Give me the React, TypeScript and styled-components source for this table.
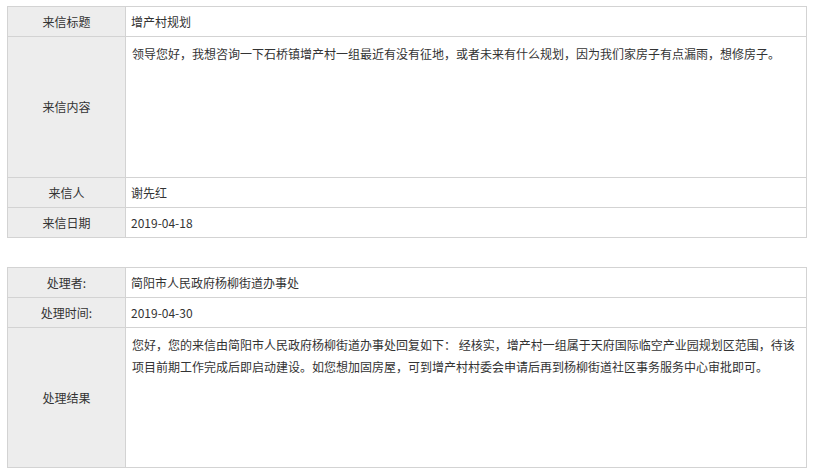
import React, { ReactElement } from 'react'
import styled, { createGlobalStyle } from 'styled-components';

interface Row {
  label: string,
  value: string,
  tall?: number
}

const GlobalStyle = createGlobalStyle`
  body {
    margin: 0;
    padding: 6px 7px 0;
    background: #fff;
    font-family: "Microsoft YaHei", "Noto Sans CJK SC", "Liberation Sans", sans-serif;
    font-size: 12px;
    color: #333;
  }
`;

const Table = styled.table`
  width: 800px;
  border-collapse: collapse;
  border: 1px solid #d3d3d3;
  table-layout: fixed;

  & + & {
    margin-top: 29px;
  }
`;

const Label = styled.td`
  width: 117px;
  background: #ededed;
  border: 1px solid #d3d3d3;
  text-align: center;
  vertical-align: middle;
  padding: 0;
  line-height: 20px;
`;

const Value = styled.td<{ $tall?: number }>`
  border: 1px solid #d3d3d3;
  padding: ${(p) => (p.$tall ? '6px 6px 0' : '0 5px')};
  height: ${(p) => (p.$tall ? p.$tall - 7 : 29)}px;
  vertical-align: ${(p) => (p.$tall ? 'top' : 'middle')};
  line-height: ${(p) => (p.$tall ? '22px' : '20px')};
  color: #333;
`;

const letter: Row[] = [
  { label: '来信标题', value: '增产村规划' },
  {
    label: '来信内容',
    value: '领导您好，我想咨询一下石桥镇增产村一组最近有没有征地，或者未来有什么规划，因为我们家房子有点漏雨，想修房子。',
    tall: 141
  },
  { label: '来信人', value: '谢先红' },
  { label: '来信日期', value: '2019-04-18' }
];

const reply: Row[] = [
  { label: '处理者:', value: '简阳市人民政府杨柳街道办事处' },
  { label: '处理时间:', value: '2019-04-30' },
  {
    label: '处理结果',
    value: '您好，您的来信由简阳市人民政府杨柳街道办事处回复如下： 经核实，增产村一组属于天府国际临空产业园规划区范围，待该项目前期工作完成后即启动建设。如您想加固房屋，可到增产村村委会申请后再到杨柳街道社区事务服务中心审批即可。',
    tall: 140
  }
];

function InfoTable({ rows }: { rows: Row[] }): ReactElement {
  return (
    <Table>
      <tbody>
        {React.Children.toArray(
          rows.map(({ label, value, tall }) => (
            <tr>
              <Label>{label}</Label>
              <Value $tall={tall}>{value}</Value>
            </tr>
          ))
        )}
      </tbody>
    </Table>
  );
}

export default function App(): ReactElement {
  return (
    <>
      <GlobalStyle />
      <InfoTable rows={letter} />
      <InfoTable rows={reply} />
    </>
  )
}
